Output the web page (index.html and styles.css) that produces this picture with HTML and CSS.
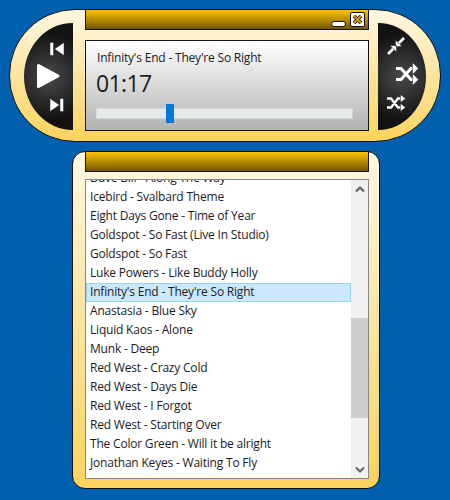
FILE: index.html
```html
<!DOCTYPE html>
<html lang="en">
<head>
  <meta charset="UTF-8" />
  <title>Music Player</title>
  <link rel="stylesheet" href="styles.css">
</head>
<body>

  <div class="player">
    <div class="cap cap-left">
      <button class="icon prev" aria-label="Previous">
        <svg width="16" height="16" viewBox="0 0 16 16"><path d="M1 1.500h3.500v13H1zM15 1.500v13L5.500 8z" /></svg>
      </button>
      <button class="icon play" aria-label="Play">
        <svg width="24" height="26" viewBox="0 0 24 26"><path d="M2.500 2.500 L22 13 L2.500 23.500Z" /></svg>
      </button>
      <button class="icon next" aria-label="Next">
        <svg width="16" height="16" viewBox="0 0 16 16"><path d="M11 1.500h3.500v13H11zM1 1.500v13L10.500 8z" /></svg>
      </button>
    </div>

    <div class="middle">
      <div class="titlebar">
        <button class="win-min" aria-label="Minimize"></button>
        <button class="win-close" aria-label="Close">
          <svg width="11" height="11" viewBox="0 0 11 11">
            <path class="x-back" d="M2 2l7 7M9 2l-7 7" />
            <path class="x-front" d="M2 2l7 7M9 2l-7 7" />
          </svg>
        </button>
      </div>
      <div class="screen">
        <div class="track-name">Infinity's End - They're So Right</div>
        <div class="time">01:17</div>
        <div class="slider"><div class="slider-thumb"></div></div>
      </div>
    </div>

    <div class="cap cap-right">
      <button class="icon compact" aria-label="Compact">
        <svg width="20" height="20" viewBox="0 0 20 20">
          <path class="line" d="M18 2l-5.500 5.500M2 18l5.500-5.500" />
          <path d="M9.500 4v6.500H16zM10.500 16V9.500H4z" />
        </svg>
      </button>
      <button class="icon shuffle-big" aria-label="Shuffle">
        <svg width="24" height="24" viewBox="0 0 24 24">
          <path class="line" d="M1 6.500h5l10 11h3M1 17.500h5l10-11h3" />
          <path d="M17.500 .5l6 6-6 6zM17.500 11.500l6 6-6 6z" />
        </svg>
      </button>
      <button class="icon shuffle-small" aria-label="Shuffle all">
        <svg width="20" height="18" viewBox="0 0 20 18">
          <path class="line thin" d="M1 4.500h4l7 9h3M1 13.500h4l7-9h3" />
          <path d="M14.500 .5l5 4-5 4zM14.500 9.500l5 4-5 4z" />
        </svg>
      </button>
    </div>
  </div>

  <div class="playlist">
    <div class="titlebar titlebar-empty"></div>
    <div class="list-box">
      <div class="rows">
        <div class="row">Dave Bill - Along The Way</div>
        <div class="row">Icebird - Svalbard Theme</div>
        <div class="row">Eight Days Gone - Time of Year</div>
        <div class="row">Goldspot - So Fast (Live In Studio)</div>
        <div class="row">Goldspot - So Fast</div>
        <div class="row">Luke Powers - Like Buddy Holly</div>
        <div class="row selected">Infinity's End - They're So Right</div>
        <div class="row">Anastasia - Blue Sky</div>
        <div class="row">Liquid Kaos - Alone</div>
        <div class="row">Munk - Deep</div>
        <div class="row">Red West - Crazy Cold</div>
        <div class="row">Red West - Days Die</div>
        <div class="row">Red West - I Forgot</div>
        <div class="row">Red West - Starting Over</div>
        <div class="row">The Color Green - Will it be alright</div>
        <div class="row">Jonathan Keyes - Waiting To Fly</div>
      </div>
      <div class="scrollbar">
        <div class="arrow">
          <svg width="10" height="8" viewBox="0 0 10 8"><path d="M1 6.500l4-4 4 4" /></svg>
        </div>
        <div class="scroll-track"><div class="scroll-thumb"></div></div>
        <div class="arrow">
          <svg width="10" height="8" viewBox="0 0 10 8"><path d="M1 1.500l4 4 4-4" /></svg>
        </div>
      </div>
    </div>
  </div>

</body>
</html>
```

FILE: styles.css
```css
body {
  font-family: "Open Sans", "Noto Sans", sans-serif;
  margin: 0;
  padding: 9px 9px 0;
  height: 500px;
  box-sizing: border-box;
  overflow: hidden;
  background-color: #0060ae;
  color: #1c1c1c;
}
button {
  border: none;
  background: none;
  padding: 0;
  display: block;
}

/* player */
.player {
  display: flex;
  width: 432px;
  height: 133px;
  box-sizing: border-box;
  border: 1px solid #111;
  border-radius: 66px;
  background: linear-gradient(#fff7e2, #fbd35c);
}
.cap {
  width: 49px;
  height: 107px;
  margin-top: 13px;
  background: radial-gradient(circle at center, #4a4a4a 0, #121212 75%);
  display: flex;
  flex-direction: column;
}
.cap-left {
  margin-left: 14px;
  border-radius: 49px 0 0 49px / 54px 0 0 54px;
}
.cap-right {
  width: 48px;
  margin-left: 9px;
  border-radius: 0 48px 48px 0 / 0 54px 54px 0;
}
.middle {
  width: 284px;
  margin-left: 12px;
  margin-top: -1px;
}
.icon svg {
  display: block;
  fill: #fff;
  stroke: #222;
  stroke-width: 0.5;
}
.prev { margin: 18px 0 0 25px; }
.play { margin: 6px 0 0 12px; }
.play svg { stroke: #fff; stroke-width: 3; stroke-linejoin: round; }
.next { margin: 8px 0 0 25px; }
.compact { margin: 13px 0 0 8px; }
.shuffle-big { margin: 6px 0 0 17px; }
.shuffle-small { margin: 8px 0 0 8px; }
.icon .line {
  fill: none;
  stroke: #fff;
  stroke-width: 2.6;
}
.shuffle-big .line { stroke-width: 3; }
.icon .thin { stroke-width: 2.4; }

.titlebar {
  height: 21px;
  box-sizing: border-box;
  border: 1px solid #111;
  background: linear-gradient(#ffc400, #745500);
  display: flex;
  justify-content: flex-end;
  align-items: flex-start;
  padding-right: 3px;
}
.win-min {
  width: 15px;
  height: 6px;
  margin: 11px 4px 0 0;
  box-sizing: border-box;
  background: #fff;
  border: 1px solid #111;
  border-radius: 3px;
}
.win-close {
  width: 15px;
  height: 15px;
  margin-top: 2px;
  box-sizing: border-box;
  background: #fff;
  border: 1px solid #111;
  border-radius: 2px;
  display: flex;
  align-items: center;
  justify-content: center;
}
.win-close svg { fill: none; }
.x-back { stroke: #1c1400; stroke-width: 3.6; }
.x-front { stroke: #c99a10; stroke-width: 2; }
.screen {
  height: 91px;
  margin-top: 10px;
  box-sizing: border-box;
  border: 1px solid #111;
  background: linear-gradient(#fff, #b2b2b2);
  padding: 8px 15px 0 10px;
}
.track-name {
  font-size: 12px;
  line-height: 17px;
  letter-spacing: -0.2px;
  padding-left: 1px;
}
.time {
  font-size: 23px;
  letter-spacing: -0.6px;
  line-height: 33px;
  margin-top: 1px;
}
.slider {
  position: relative;
  height: 11px;
  margin-top: 8px;
  box-sizing: border-box;
  background: #e6e9e9;
  border: 1px solid #d6d8d8;
}
.slider-thumb {
  position: absolute;
  left: 69px;
  top: -5px;
  width: 8px;
  height: 19px;
  background: #0078d7;
}

/* playlist */
.playlist {
  width: 308px;
  height: 338px;
  margin: 9px 0 0 63px;
  box-sizing: border-box;
  border: 1px solid #111;
  border-radius: 13px;
  background: linear-gradient(#fff7e2, #fbd35c);
  padding: 0 10px 0 12px;
}
.titlebar-empty { margin-top: -1px; }
.list-box {
  display: flex;
  height: 300px;
  margin-top: 7px;
  box-sizing: border-box;
  border: 1px solid #828790;
  background: #fff;
  overflow: hidden;
}
.rows {
  flex: 1;
  margin-top: -11px;
}
.row {
  height: 19px;
  box-sizing: border-box;
  padding-left: 4px;
  font-size: 12px;
  line-height: 18px;
  letter-spacing: -0.2px;
  white-space: nowrap;
}
.selected {
  background: #cce8ff;
  border: 1px solid #99d1ff;
  padding-left: 3px;
  line-height: 16px;
}
.scrollbar {
  width: 17px;
  background: #f0f0f0;
  display: flex;
  flex-direction: column;
}
.arrow {
  height: 17px;
  display: flex;
  align-items: center;
  justify-content: center;
}
.arrow svg {
  fill: none;
  stroke: #606060;
  stroke-width: 2;
}
.scroll-track { flex: 1; }
.scroll-thumb {
  height: 100px;
  margin-top: 121px;
  background: #cdcdcd;
}
```
